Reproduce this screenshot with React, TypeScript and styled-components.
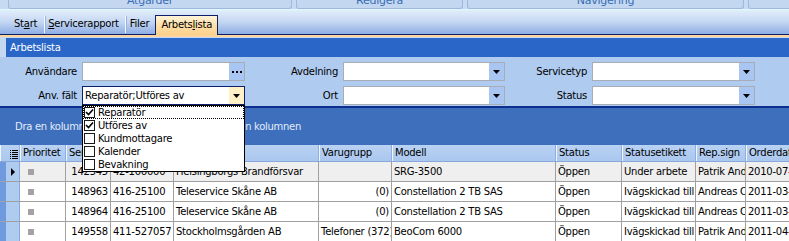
import styled, { createGlobalStyle } from "styled-components";

const GlobalStyle = createGlobalStyle`
  html, body { margin: 0; padding: 0; }
  body {
    font-family: "DejaVu Sans", Verdana, sans-serif;
    font-size: 10px;
    letter-spacing: -0.25px;
    background: #c4d8f1;
    overflow: hidden;
  }
`;

const COLS = "20px 46px 45px 63px 145px 73px 164px 66px 74px 50px 90px";

const rows = [
  ["142545", "42-106000", "Helsingborgs Brandförsvar", "", "SRG-3500", "Öppen", "Under arbete", "Patrik Andersson", "2010-07-14"],
  ["148963", "416-25100", "Teleservice Skåne AB", "(0)", "Constellation 2 TB SAS", "Öppen", "Ivägskickad till", "Andreas Olsson", "2011-03-02"],
  ["148964", "416-25100", "Teleservice Skåne AB", "(0)", "Constellation 2 TB SAS", "Öppen", "Ivägskickad till", "Andreas Olsson", "2011-03-02"],
  ["149558", "411-527057", "Stockholmsgården AB", "Telefoner (372)", "BeoCom 6000", "Öppen", "Ivägskickad till", "Patrik Andersson", "2011-04-11"],
];

const listItems = [
  { label: "Reparatör", checked: true },
  { label: "Utföres av", checked: true },
  { label: "Kundmottagare", checked: false },
  { label: "Kalender", checked: false },
  { label: "Bevakning", checked: false },
];

function Arrow() {
  return (
    <svg width="7" height="4" viewBox="0 0 7 4">
      <polygon points="0,0 7,0 3.5,4" fill="#000" />
    </svg>
  );
}

function Dots() {
  return (
    <svg width="10" height="2" viewBox="0 0 10 2">
      <rect x="0" y="0" width="2" height="2" fill="#000" />
      <rect x="4" y="0" width="2" height="2" fill="#000" />
      <rect x="8" y="0" width="2" height="2" fill="#000" />
    </svg>
  );
}

function Check() {
  return (
    <svg width="9" height="9" viewBox="0 0 9 9">
      <path d="M1 4 L3.5 6.5 L8 1.5" stroke="#000" strokeWidth="1.6" fill="none" />
    </svg>
  );
}

function ColumnChooser() {
  return (
    <svg width="8" height="9" viewBox="0 0 8 9">
      {[0, 2, 4, 6, 8].map((y) => (
        <g key={y}>
          <rect x="0" y={y} width="1" height="1" fill="#000" />
          <rect x="2" y={y} width="6" height="1" fill="#000" />
        </g>
      ))}
    </svg>
  );
}

export default function App() {
  return (
    <Window>
      <GlobalStyle />
      <Ribbon>
        <RibbonGroup $w={284}>Atgärder</RibbonGroup>
        <RibbonGroup $w={167}>Redigera</RibbonGroup>
        <RibbonGroup $w={277}>Navigering</RibbonGroup>
        <RibbonGroup $w={60}></RibbonGroup>
      </Ribbon>
      <TabStrip>
        <Tab $pl={5} $pr={7}>St<u>a</u>rt</Tab>
        <TabSep />
        <Tab $pl={2} $pr={6}><u>S</u>ervicerapport</Tab>
        <TabSep />
        <Tab $pl={3} $pr={5}>Filer</Tab>
        <Tab $active $pl={5} $pr={5}>Arbets<u>l</u>ista</Tab>
      </TabStrip>
      <PeachLine />
      <Body>
        <TitleBar>Arbetslista</TitleBar>
        <FilterPanel>
          <Label>Användare</Label>
          <Field>
            <FieldText></FieldText>
            <FieldButton><Dots /></FieldButton>
          </Field>
          <Label>Avdelning</Label>
          <Field>
            <FieldText></FieldText>
            <FieldButton><Arrow /></FieldButton>
          </Field>
          <Label>Servicetyp</Label>
          <Field>
            <FieldText></FieldText>
            <FieldButton><Arrow /></FieldButton>
          </Field>

          <Label>Anv. fält</Label>
          <Field $focus>
            <FieldText>Reparatör;Utföres av</FieldText>
            <FieldButton $focus><Arrow /></FieldButton>
          </Field>
          <Label>Ort</Label>
          <Field>
            <FieldText></FieldText>
            <FieldButton><Arrow /></FieldButton>
          </Field>
          <Label>Status</Label>
          <Field>
            <FieldText></FieldText>
            <FieldButton><Arrow /></FieldButton>
          </Field>
        </FilterPanel>
        <NavyLine />
        <GroupPanel>Dra en kolumnrubrik hit för att gruppera efter den kolumnen</GroupPanel>
        <Grid>
          <HeaderRow>
            <HeaderCell $icon><ColumnChooser /></HeaderCell>
            <HeaderCell>Prioritet</HeaderCell>
            <HeaderCell>Servicenr</HeaderCell>
            <HeaderCell>Artikelnr</HeaderCell>
            <HeaderCell>Kund</HeaderCell>
            <HeaderCell>Varugrupp</HeaderCell>
            <HeaderCell>Modell</HeaderCell>
            <HeaderCell>Status</HeaderCell>
            <HeaderCell>Statusetikett</HeaderCell>
            <HeaderCell>Rep.sign</HeaderCell>
            <HeaderCell>Orderdatum</HeaderCell>
          </HeaderRow>
          {rows.map((r, i) => (
            <DataRow key={i} $current={i === 0}>
              <Indicator>{i === 0 && <Pointer />}</Indicator>
              <Cell $center><PrioBox /></Cell>
              <Cell $right>{r[0]}</Cell>
              <Cell>{r[1]}</Cell>
              <Cell>{r[2]}</Cell>
              <Cell $right={r[3] === "(0)"}>{r[3]}</Cell>
              <Cell>{r[4]}</Cell>
              <Cell>{r[5]}</Cell>
              <Cell>{r[6]}</Cell>
              <Cell>{r[7]}</Cell>
              <Cell>{r[8]}</Cell>
            </DataRow>
          ))}
        </Grid>
      </Body>
      <DropList>
        {listItems.map((it, i) => (
          <ListItem key={it.label} $focus={i === 0}>
            <CheckBox>{it.checked && <Check />}</CheckBox>
            {it.label}
          </ListItem>
        ))}
      </DropList>
    </Window>
  );
}

const Window = styled.div`
  position: relative;
  width: 789px;
  height: 241px;
  overflow: hidden;
  display: flex;
  flex-direction: column;
  background: #c4d8f1;
`;

const Ribbon = styled.div`
  height: 12px;
  flex: none;
  display: flex;
  gap: 4px;
  padding-left: 8px;
  background: linear-gradient(#c6daf1 0, #c6daf1 9px, #e9f6fd 9px, #d2ecf9 12px);
`;

const RibbonGroup = styled.div<{ $w: number }>`
  width: ${(p) => p.$w}px;
  flex: none;
  height: 9px;
  box-sizing: border-box;
  border: 1px solid #9db9dc;
  border-top: none;
  border-radius: 0 0 3px 3px;
  background: #c3d8f0;
  color: #3a6db5;
  font-size: 11px;
  display: flex;
  justify-content: center;
  align-items: flex-end;
  line-height: 11px;
  padding-bottom: 2px;
  overflow: hidden;
`;

const TabStrip = styled.div`
  height: 23px;
  flex: none;
  box-sizing: border-box;
  display: flex;
  align-items: flex-end;
  padding-left: 9px;
  background: linear-gradient(#dfeafa, #c4d7f3 45%, #8eade3);
  border-bottom: 1px solid #0b1f6b;
`;

const Tab = styled.div<{ $active?: boolean; $pl: number; $pr: number }>`
  height: ${(p) => (p.$active ? "20px" : "19px")};
  box-sizing: border-box;
  line-height: 18px;
  padding: 0 ${(p) => p.$pr}px 0 ${(p) => p.$pl}px;
  color: #000;
  margin-bottom: ${(p) => (p.$active ? "-1px" : "0")};
  margin-left: ${(p) => (p.$active ? "1px" : "0")};
  border: ${(p) => (p.$active ? "1px solid #0b1f6b" : "none")};
  border-bottom: none;
  background: ${(p) => (p.$active ? "linear-gradient(#fff4d9, #ffdfa6 50%, #fbd08c)" : "transparent")};
  u { text-decoration: underline; }
`;

const TabSep = styled.div`
  width: 1px;
  height: 17px;
  margin-bottom: 1px;
  background: #f4f8fe;
  border-right: 1px solid #97b3de;
`;

const PeachLine = styled.div`
  height: 3px;
  flex: none;
  background: linear-gradient(#fbd39b 0, #fbd39b 2px, #c7daf4 2px);
`;

const Body = styled.div`
  flex: 1;
  display: flex;
  flex-direction: column;
  background: #c4d8f1;
`;

const TitleBar = styled.div`
  height: 19px;
  margin-left: 6px;
  padding-left: 4px;
  line-height: 19px;
  background: #2a66c8;
  color: #fff;
`;

const FilterPanel = styled.div`
  display: grid;
  grid-template-columns: 77px 163px 88px 162px 77px 163px;
  column-gap: 5px;
  row-gap: 5px;
  padding: 5px 0 1px 0;
  background: #afcbf0;
`;

const Label = styled.div`
  text-align: right;
  line-height: 19px;
  color: #000;
  white-space: nowrap;
`;

const Field = styled.div<{ $focus?: boolean }>`
  height: 19px;
  box-sizing: border-box;
  display: flex;
  background: #fff;
  border: 1px solid ${(p) => (p.$focus ? "#0b1f6b" : "#a7adb5")};
`;

const FieldText = styled.div`
  flex: 1;
  padding-left: 2px;
  line-height: 17px;
  white-space: nowrap;
  overflow: hidden;
`;

const FieldButton = styled.div<{ $focus?: boolean }>`
  width: 15px;
  flex: none;
  display: flex;
  align-items: center;
  justify-content: center;
  background: ${(p) => (p.$focus ? "#fff0c6" : "#a9c5f2")};
`;

const NavyLine = styled.div`
  height: 2px;
  background: #0c2f8f;
`;

const GroupPanel = styled.div`
  height: 37px;
  line-height: 37px;
  padding-left: 15px;
  background: #3e6fbc;
  color: #e4ecf8;
  white-space: nowrap;
  letter-spacing: -0.3px;
`;

const Grid = styled.div`
  flex: 1;
  background: #fff;
`;

const HeaderRow = styled.div`
  display: grid;
  grid-template-columns: ${COLS};
  height: 17px;
  box-sizing: border-box;
  background: linear-gradient(#b9d2f3, #aac7ef);
  border-bottom: 1px solid #86a8dc;
`;

const HeaderCell = styled.div<{ $icon?: boolean }>`
  box-sizing: border-box;
  line-height: 15px;
  padding-left: ${(p) => (p.$icon ? "9px" : "2px")};
  padding-top: ${(p) => (p.$icon ? "3px" : "0")};
  border-right: 1px solid #8eaee0;
  border-left: 1px solid #eef5fe;
  white-space: nowrap;
  overflow: hidden;
  color: #000;
`;

const DataRow = styled.div<{ $current?: boolean }>`
  display: grid;
  grid-template-columns: ${COLS};
  height: 20px;
  box-sizing: border-box;
  border-bottom: 1px solid #a0a0a0;
  background: ${(p) => (p.$current ? "#efefef" : "#fff")};
`;

const Cell = styled.div<{ $right?: boolean; $center?: boolean }>`
  box-sizing: border-box;
  border-right: 1px solid #a0a0a0;
  padding: 0 2px;
  line-height: 19px;
  white-space: nowrap;
  overflow: hidden;
  text-align: ${(p) => (p.$right ? "right" : "left")};
  display: ${(p) => (p.$center ? "flex" : "block")};
  align-items: center;
  padding-left: ${(p) => (p.$center ? "8px" : "2px")};
  color: #000;
`;

const Indicator = styled.div`
  box-sizing: border-box;
  background: #b0cbf0;
  border-left: 6px solid #6f9ade;
  border-right: 1px solid #86a8dc;
  display: flex;
  align-items: center;
  justify-content: center;
`;

const Pointer = styled.div`
  width: 0;
  height: 0;
  border-top: 4px solid transparent;
  border-bottom: 4px solid transparent;
  border-left: 4px solid #000;
`;

const PrioBox = styled.div`
  width: 6px;
  height: 6px;
  background: #a3a3a3;
`;

const DropList = styled.div`
  position: absolute;
  left: 82px;
  top: 105px;
  width: 163px;
  height: 67px;
  box-sizing: border-box;
  border: 1px solid #000;
  background: #fff;
`;

const ListItem = styled.div<{ $focus?: boolean }>`
  height: 13px;
  box-sizing: border-box;
  display: flex;
  align-items: center;
  gap: 3px;
  line-height: 13px;
  color: #000;
  outline: ${(p) => (p.$focus ? "1px dotted #000" : "none")};
  outline-offset: -1px;
`;

const CheckBox = styled.div`
  width: 11px;
  height: 11px;
  box-sizing: border-box;
  border: 1px solid #1a1a1a;
  background: #fff;
  display: flex;
  align-items: center;
  justify-content: center;
  flex: none;
  margin-left: 1px;
`;
